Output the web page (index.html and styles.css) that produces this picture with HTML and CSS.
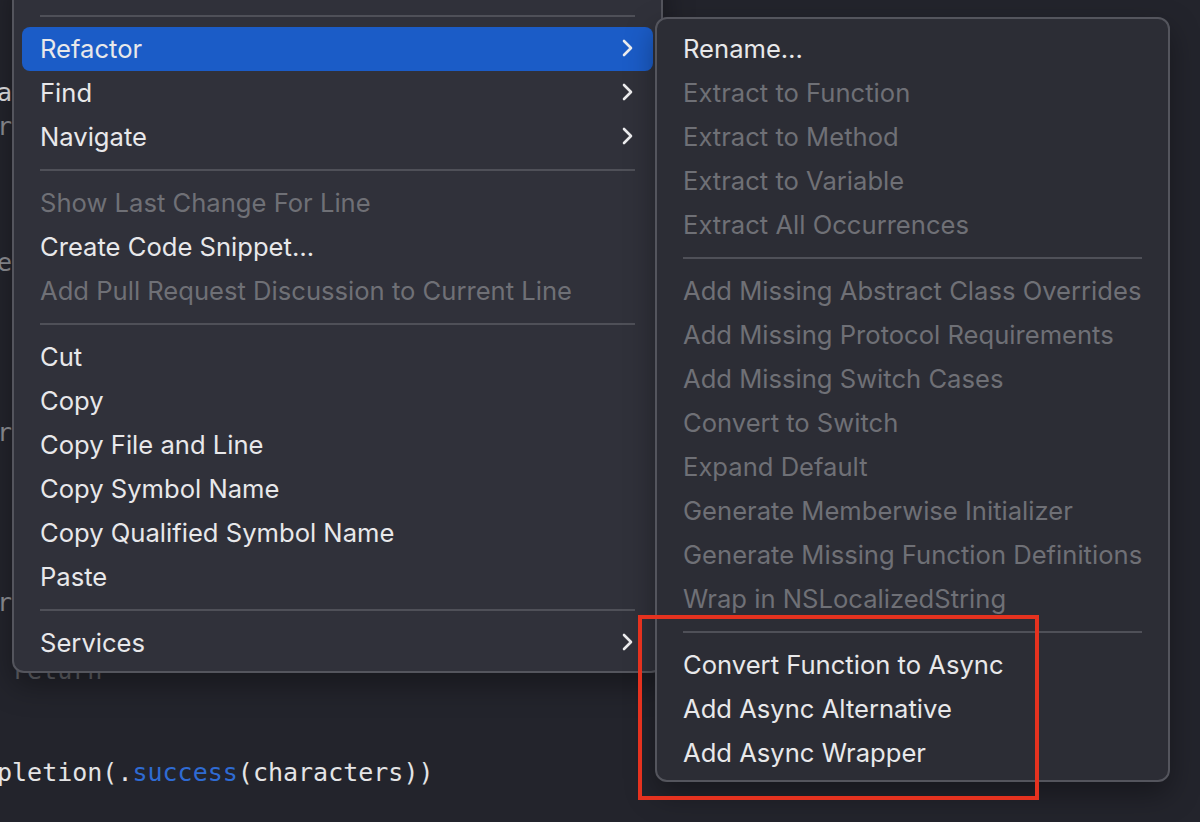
FILE: index.html
```html
<!DOCTYPE html>
<html>
<head>
<meta charset="utf-8">
<link rel="stylesheet" href="styles.css">
</head>
<body>
<div class="editor">
  <div class="code">
    <div class="ln bright">a</div>
    <div class="ln">r</div>
    <div class="ln"></div>
    <div class="ln"></div>
    <div class="ln"></div>
    <div class="ln">e</div>
    <div class="ln"></div>
    <div class="ln"></div>
    <div class="ln"></div>
    <div class="ln"></div>
    <div class="ln">r</div>
    <div class="ln"></div>
    <div class="ln"></div>
    <div class="ln"></div>
    <div class="ln"></div>
    <div class="ln">r</div>
    <div class="ln"></div>
    <div class="ln small"> return</div>
    <div class="ln"></div>
    <div class="ln"></div>
    <div class="ln bright">pletion(.<span class="kw">success</span>(characters))</div>
  </div>

  <div class="menu main-menu">
    <div class="sep"></div>
    <div class="item active"><span>Refactor</span><svg class="chev" viewBox="0 0 11 18"><path d="M2 2 L9 9 L2 16"/></svg></div>
    <div class="item"><span>Find</span><svg class="chev" viewBox="0 0 11 18"><path d="M2 2 L9 9 L2 16"/></svg></div>
    <div class="item"><span>Navigate</span><svg class="chev" viewBox="0 0 11 18"><path d="M2 2 L9 9 L2 16"/></svg></div>
    <div class="sep"></div>
    <div class="item disabled"><span>Show Last Change For Line</span></div>
    <div class="item"><span>Create Code Snippet…</span></div>
    <div class="item disabled"><span>Add Pull Request Discussion to Current Line</span></div>
    <div class="sep"></div>
    <div class="item"><span>Cut</span></div>
    <div class="item"><span>Copy</span></div>
    <div class="item"><span>Copy File and Line</span></div>
    <div class="item"><span>Copy Symbol Name</span></div>
    <div class="item"><span>Copy Qualified Symbol Name</span></div>
    <div class="item"><span>Paste</span></div>
    <div class="sep"></div>
    <div class="item"><span>Services</span><svg class="chev" viewBox="0 0 11 18"><path d="M2 2 L9 9 L2 16"/></svg></div>
  </div>

  <div class="menu sub-menu">
    <div class="item"><span>Rename…</span></div>
    <div class="item disabled"><span>Extract to Function</span></div>
    <div class="item disabled"><span>Extract to Method</span></div>
    <div class="item disabled"><span>Extract to Variable</span></div>
    <div class="item disabled"><span>Extract All Occurrences</span></div>
    <div class="sep"></div>
    <div class="item disabled"><span>Add Missing Abstract Class Overrides</span></div>
    <div class="item disabled"><span>Add Missing Protocol Requirements</span></div>
    <div class="item disabled"><span>Add Missing Switch Cases</span></div>
    <div class="item disabled"><span>Convert to Switch</span></div>
    <div class="item disabled"><span>Expand Default</span></div>
    <div class="item disabled"><span>Generate Memberwise Initializer</span></div>
    <div class="item disabled"><span>Generate Missing Function Definitions</span></div>
    <div class="item disabled"><span>Wrap in NSLocalizedString</span></div>
    <div class="sep"></div>
    <div class="item"><span>Convert Function to Async</span></div>
    <div class="item"><span>Add Async Alternative</span></div>
    <div class="item"><span>Add Async Wrapper</span></div>
  </div>

  <div class="highlight-box"></div>
</div>
</body>
</html>
```

FILE: styles.css
```css
* { box-sizing: border-box; }
html, body {
  margin: 0;
  padding: 0;
  width: 1200px;
  height: 822px;
  overflow: hidden;
  background: #23242c;
}
.editor {
  position: relative;
  width: 1200px;
  height: 822px;
  overflow: hidden;
  background: #23242c;
}
.code {
  padding-top: 76px;
  margin-left: -3px;
  font-family: "DejaVu Sans Mono", "Liberation Mono", monospace;
  font-size: 25px;
  color: #8d8e94;
}
.ln {
  height: 34px;
  line-height: 34px;
  white-space: pre;
}
.ln.bright { color: #e4e4e6; }
.ln.small { color: #5f6066; }
.kw { color: #2f6bd3; }

.menu {
  position: absolute;
  display: flex;
  flex-direction: column;
  border: 2px solid #54555d;
  border-radius: 12px;
  padding: 0 8px;
  font-family: "Inter", "Noto Sans", sans-serif;
  font-size: 25.6px;
  color: #e8e8ea;
}
.main-menu {
  left: 12px;
  top: -30px;
  width: 651px;
  height: 703px;
  padding-top: 33px;
  background: #30313a;
  box-shadow: 0 12px 30px rgba(0,0,0,0.35);
}
.sub-menu {
  left: 655px;
  top: 17px;
  width: 515px;
  height: 765px;
  padding-top: 8px;
  background: #2c2d35;
  box-shadow: 0 12px 30px rgba(0,0,0,0.35);
}
.item {
  height: 44px;
  flex: none;
  display: flex;
  align-items: center;
  justify-content: space-between;
  padding: 0 20px 2px 18px;
  border-radius: 8px;
  white-space: nowrap;
}
.item.active { background: #1b5cc7; }
.item.disabled { color: #6f7076; }
.chev {
  width: 11px;
  height: 18px;
  fill: none;
  stroke: #ececee;
  stroke-width: 2.6;
  stroke-linecap: round;
  stroke-linejoin: round;
}
.sep {
  flex: none;
  height: 22px;
  display: flex;
  align-items: center;
  padding: 0 18px;
}
.sep::before {
  content: "";
  flex: 1;
  height: 2px;
  background: #4f5058;
}
.highlight-box {
  position: absolute;
  left: 638px;
  top: 615px;
  width: 401px;
  height: 185px;
  border: 4px solid #e5321f;
}
```
